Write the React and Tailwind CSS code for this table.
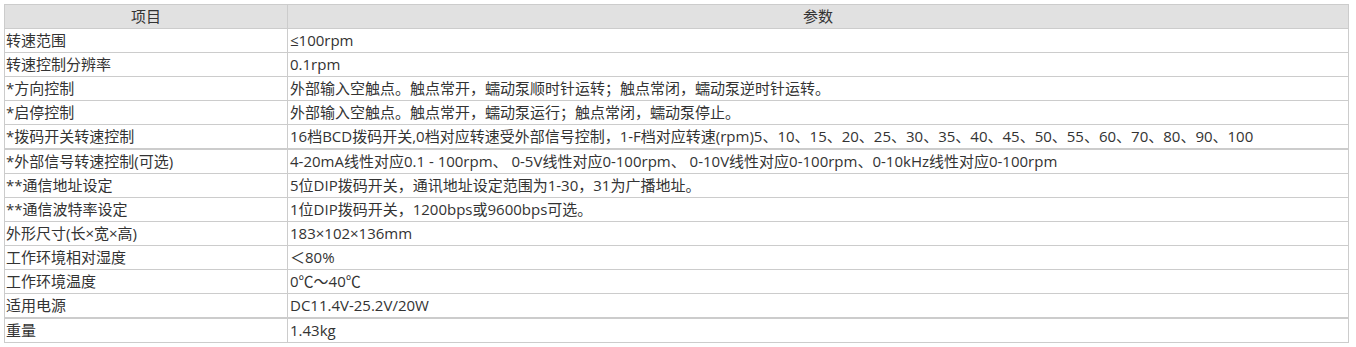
const rows = [
  ['转速范围', '≤100rpm'],
  ['转速控制分辨率', '0.1rpm'],
  ['*方向控制', '外部输入空触点。触点常开，蠕动泵顺时针运转；触点常闭，蠕动泵逆时针运转。'],
  ['*启停控制', '外部输入空触点。触点常开，蠕动泵运行；触点常闭，蠕动泵停止。'],
  ['*拨码开关转速控制', '16档BCD拨码开关,0档对应转速受外部信号控制，1-F档对应转速(rpm)5、10、15、20、25、30、35、40、45、50、55、60、70、80、90、100', true],
  ['*外部信号转速控制(可选)', '4-20mA线性对应0.1 - 100rpm、 0-5V线性对应0-100rpm、 0-10V线性对应0-100rpm、0-10kHz线性对应0-100rpm'],
  ['**通信地址设定', '5位DIP拨码开关，通讯地址设定范围为1-30，31为广播地址。'],
  ['**通信波特率设定', '1位DIP拨码开关，1200bps或9600bps可选。'],
  ['外形尺寸(长×宽×高)', '183×102×136mm'],
  ['工作环境相对湿度', '＜80%'],
  ['工作环境温度', '0℃～40℃'],
  ['适用电源', 'DC11.4V-25.2V/20W', true],
  ['重量', '1.43kg'],
];

export default function App() {
  return (
    <div
      className="bg-white w-[1356px] h-[347px] pt-[4px] pl-[4px] text-[15px] text-[#333]"
      style={{ fontFamily: '"Open Sans", "Noto Sans CJK SC", sans-serif' }}
    >
      <table className="border-collapse w-[1345px] table-fixed">
        <colgroup>
          <col className="w-[283px]" />
          <col />
        </colgroup>
        <thead>
          <tr className="bg-[#e1e1e1]">
            <th className="border border-[#ccc] h-[24px] p-0 font-normal text-center leading-[23px]">项目</th>
            <th className="border border-[#ccc] h-[24px] p-0 font-normal text-center leading-[23px]">参数</th>
          </tr>
        </thead>
        <tbody>
          {rows.map(([k, v, thick]) => (
            <tr key={k}>
              <td className={`border border-[#ccc] h-[24px] py-0 pl-px pr-0 leading-[23px] whitespace-nowrap ${thick ? 'border-b-2' : ''}`}>{k}</td>
              <td className={`border border-[#ccc] h-[24px] py-0 pl-[2px] pr-0 leading-[23px] whitespace-nowrap ${thick ? 'border-b-2' : ''}`}>{v}</td>
            </tr>
          ))}
        </tbody>
      </table>
    </div>
  );
}
